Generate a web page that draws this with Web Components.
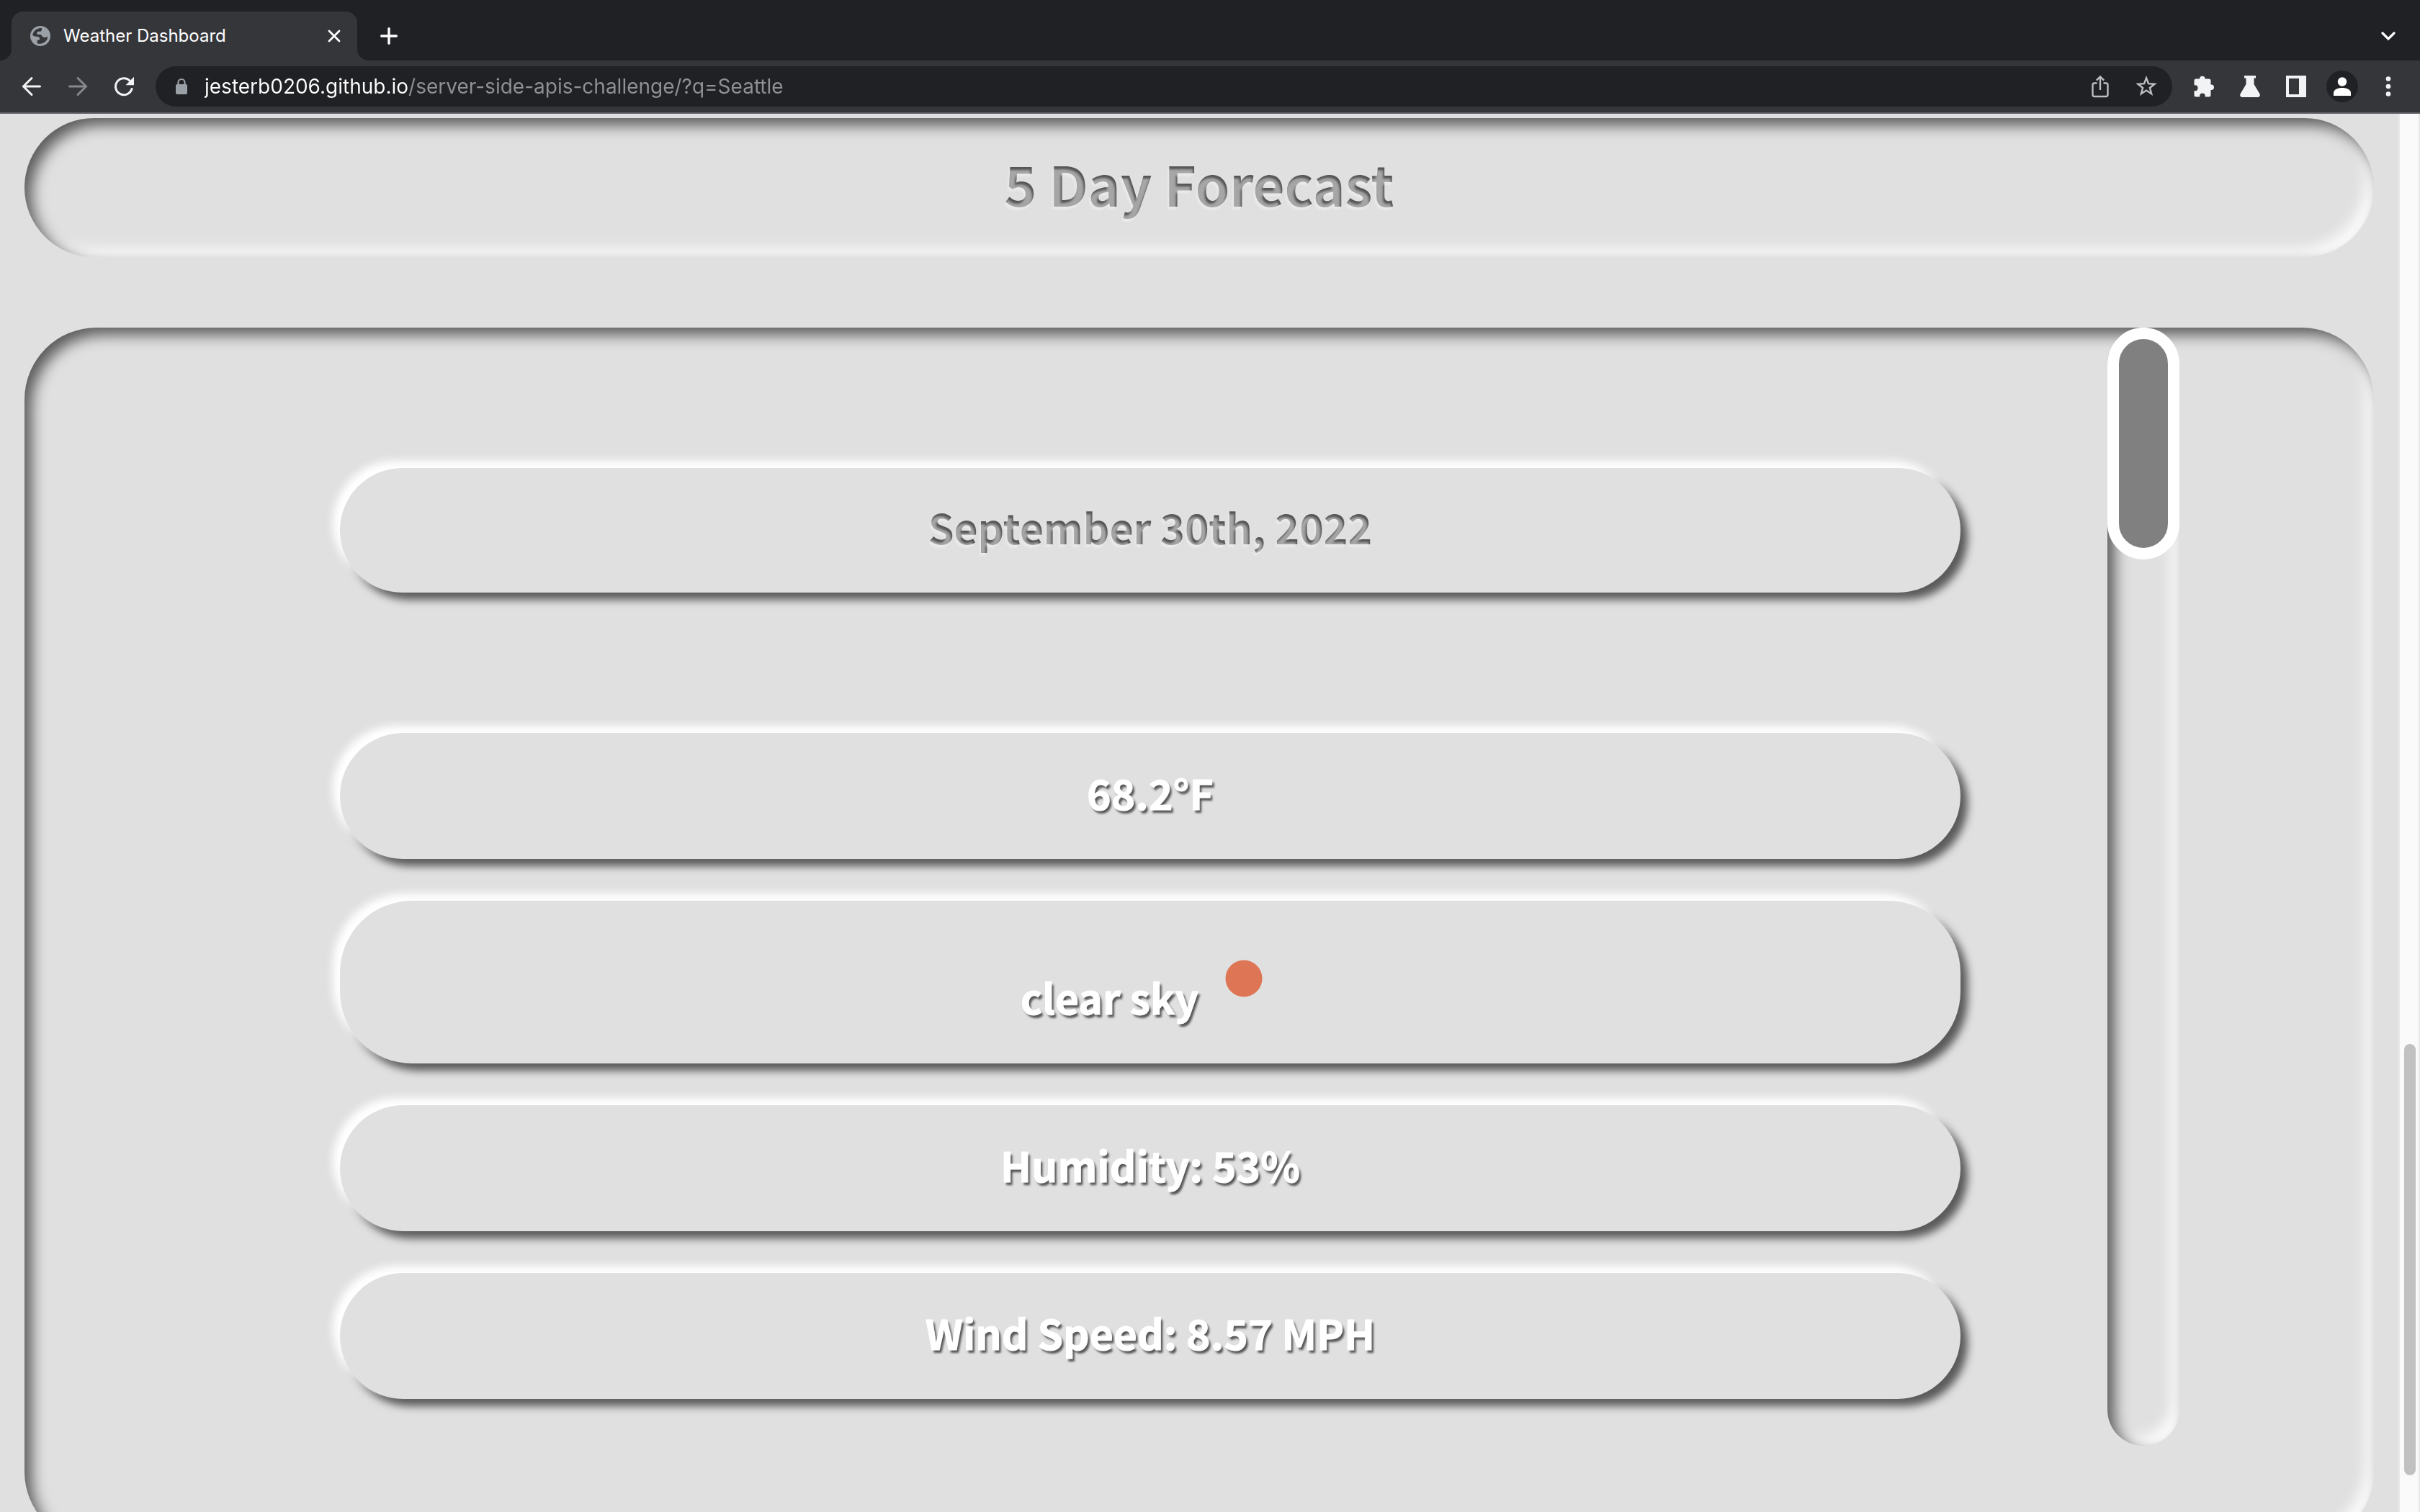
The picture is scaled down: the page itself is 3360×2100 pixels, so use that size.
<!DOCTYPE html>
<html lang="en">
<head>
<meta charset="utf-8">
<title>Weather Dashboard</title>
<style>
html, body { height: 100%; margin: 0; overflow: hidden; }
body {
  --strip: #202124;
  --toolbar: #35363a;
  --surface: #e0e0e0;
  --shade: #565656;
  --glow: rgba(245, 245, 245, .5);
  --inset: inset 10px 10px 20px #5a5a5a, inset -10px -10px 20px #fff;
  --raised: -10px -10px 12px #fff, 10px 10px 12px #5a5a5a;
  font-family: Inter, "Liberation Sans", sans-serif;
}
</style>
</head>
<body>
<browser-window>
  <tab-strip slot="tabs"><browser-tab>Weather Dashboard</browser-tab></tab-strip>
  <tool-bar slot="toolbar" url="jesterb0206.github.io/server-side-apis-challenge/?q=Seattle"></tool-bar>
  <weather-page>
    <section-title>5 Day Forecast</section-title>
    <forecast-panel>
      <forecast-date>September 30th, 2022</forecast-date>
      <forecast-item>68.2°F</forecast-item>
      <forecast-item>clear sky <sun-icon></sun-icon></forecast-item>
      <forecast-item>Humidity: 53%</forecast-item>
      <forecast-item>Wind Speed: 8.57 MPH</forecast-item>
    </forecast-panel>
  </weather-page>
  <page-scrollbar slot="scrollbar"></page-scrollbar>
</browser-window>
<script>
const define = (name, html, ready) => customElements.define(name, class extends HTMLElement {
  constructor() {
    super();
    this.attachShadow({ mode: 'open' }).innerHTML = html;
  }
  connectedCallback() { if (ready) ready(this, this.shadowRoot); }
});

const base = `:host,*{box-sizing:border-box}
*{margin:0}
button{display:grid;place-items:center;border:0;padding:0;background:none;color:inherit;font:inherit;flex:none}
svg{display:block}`;

define('browser-window', `<style>${base}
:host{display:flex;flex-direction:column;height:100vh;overflow:hidden}
.view{flex:1;min-height:0;display:flex;background:var(--surface)}
main{flex:1;min-width:0;overflow:hidden}
</style>
<slot name="tabs"></slot><slot name="toolbar"></slot>
<div class="view"><main><slot></slot></main><slot name="scrollbar"></slot></div>`);

define('tab-strip', `<style>${base}
:host{display:flex;align-items:flex-end;flex:none;height:84px;padding:0 16px;background:var(--strip);color:#fff}
.plus{width:56px;height:68px;margin-left:16px}
.more{width:56px;height:68px;margin-left:auto}
</style>
<slot></slot>
<button class="plus" aria-label="New tab"><svg width="24" height="24" viewBox="0 0 24 24" stroke="#fff" stroke-width="3.4" stroke-linecap="round"><path d="M12 1.7v20.6M1.7 12h20.6"/></svg></button>
<button class="more" aria-label="Search tabs"><svg width="20" height="14" viewBox="0 0 20 14" fill="none" stroke="#fff" stroke-width="3.2" stroke-linecap="round"><path d="M2 3l8 8 8-8"/></svg></button>`);

define('browser-tab', `<style>${base}
:host{display:flex;align-items:center;position:relative;width:480px;height:68px;padding:0 18px 0 26px;border-radius:16px 16px 0 0;background:var(--toolbar);font-size:24px;line-height:32px}
:host::before,:host::after{content:"";position:absolute;bottom:0;width:16px;height:16px}
:host::before{right:100%;background:radial-gradient(circle at 0 0,transparent 16px,var(--toolbar) 16px)}
:host::after{left:100%;background:radial-gradient(circle at 100% 0,transparent 16px,var(--toolbar) 16px)}
span{flex:1;margin-left:18px;white-space:nowrap}
button{width:28px;height:28px}
</style>
<svg width="28" height="28" viewBox="0 0 28 28"><circle cx="14" cy="14" r="14" fill="#9aa0a6"/><path d="M16 3.200C10.500 2.500 4.800 6 3.200 12.500c1.200 1.700 3 2.300 6 2.200 2.600 0 3.800.8 3.800 3.300v1.500H9.800v4.700c5 1.600 10.700-.4 13.700-5.700.4-1.300.6-2.500.6-3.700-1.700 1.200-4 1.500-6.300.7-1.500-.7-1.900-2.600-3.300-3.400h-4.300c-1.500-1.500-1-4 1-4.300h2.600c1.800 0 2.200-1.300 2.200-4.600z" fill="#35363a"/></svg>
<span><slot></slot></span>
<button aria-label="Close tab"><svg width="18" height="18" viewBox="0 0 18 18" stroke="#fff" stroke-width="2.800" stroke-linecap="round"><path d="M2 2l14 14M16 2L2 16"/></svg></button>`);

define('tool-bar', `<style>${base}
:host{display:flex;align-items:center;flex:none;height:74px;padding:0 12px;background:var(--toolbar);border-bottom:2px solid #5f6064}
button{width:64px;height:56px}
form{flex:1;min-width:0;display:flex;align-items:center;height:56px;margin:0 12px;padding:0 4px 0 27px;border-radius:28px;background:var(--strip)}
input{flex:1;min-width:0;margin-left:23px;padding:0;border:0;outline:0;height:40px;font:28px/40px Inter,"Liberation Sans",sans-serif;color:transparent;-webkit-text-fill-color:transparent;background:linear-gradient(90deg,#fff var(--host-end),#8f9193 var(--host-end));background-clip:text;-webkit-background-clip:text}
.avatar span{display:grid;place-items:center;width:44px;height:44px;border-radius:50%;background:var(--strip)}
</style>
<button aria-label="Back"><svg width="28" height="28" viewBox="0 0 28 28" fill="none" stroke="#f1f3f4" stroke-width="3" stroke-linecap="round"><path d="M25.500 14H3M14 2.500L2.500 14 14 25.500"/></svg></button>
<button aria-label="Forward"><svg width="28" height="28" viewBox="0 0 28 28" fill="none" stroke="#87888b" stroke-width="3" stroke-linecap="round"><path d="M2.500 14H25M14 2.500L25.500 14 14 25.500"/></svg></button>
<button aria-label="Reload"><svg width="28" height="28" viewBox="0 0 28 28"><path d="M22.600 6.600A11.500 11.500 0 1 0 25 17.500" fill="none" stroke="#f1f3f4" stroke-width="3" stroke-linecap="round"/><path d="M28 .8v11.400H16.500z" fill="#f1f3f4"/></svg></button>
<form>
<svg width="18" height="24" viewBox="0 0 18 24"><rect x="1" y="9" width="16" height="14" rx="2" fill="#9aa0a6"/><path d="M4.500 9V6.500a4.500 4.500 0 0 1 9 0V9" fill="none" stroke="#9aa0a6" stroke-width="2.200"/></svg>
<input id="url" aria-label="Address" spellcheck="false">
<button type="button" aria-label="Share"><svg width="24" height="32" viewBox="0 0 24 32" fill="none" stroke="#bdbec0" stroke-width="2.400"><path d="M7.500 11.500H4a2.500 2.500 0 0 0-2.500 2.500v13.500A2.500 2.500 0 0 0 4 30h16a2.500 2.500 0 0 0 2.500-2.500V14a2.500 2.500 0 0 0-2.500-2.500h-3.500M12 21V3M6.800 7.600L12 2.400l5.200 5.200"/></svg></button>
<button type="button" aria-label="Bookmark"><svg width="30" height="30" viewBox="0 0 30 30" fill="none" stroke="#bdbec0" stroke-width="2.400"><path d="M15 3.200l3 8 8.600.5-6.700 5.300 2.300 8.300-7.200-4.700-7.200 4.700 2.300-8.300-6.700-5.300 8.600-.5z"/></svg></button>
</form>
<button aria-label="Extensions"><svg width="30" height="30" viewBox="0 0 30 30" fill="#f1f3f4"><path d="M9 4.500a3.800 3.800 0 0 1 7.600 0H22A2.500 2.500 0 0 1 24.500 7v5.500h.7a3.800 3.800 0 0 1 0 7.600h-.7V27a2.500 2.500 0 0 1-2.500 2.500h-5.300V28.300a3.800 3.800 0 0 0-7.600 0v1.200H4A2.500 2.500 0 0 1 1.500 27v-5.800h1a4 4 0 0 0 0-8h-1V7A2.500 2.500 0 0 1 4 4.500z"/></svg></button>
<button aria-label="Labs"><svg width="28" height="30" viewBox="0 0 28 30" fill="#f1f3f4"><path d="M6 0h16v3.500h-2.500V12l8 13.500c1 2-.2 4.500-2.500 4.500H3c-2.300 0-3.500-2.500-2.500-4.500l8-13.500V3.500H6z"/></svg></button>
<button aria-label="Side panel"><svg width="28" height="30" viewBox="0 0 28 30"><path d="M0 0h28v30H0zM4 4v22h14V4z" fill="#f1f3f4" fill-rule="evenodd"/></svg></button>
<button class="avatar" aria-label="Profile"><span><svg width="24" height="26" viewBox="0 0 24 26" fill="#fff"><circle cx="12" cy="6.500" r="6.200"/><path d="M0 26v-4c0-4.500 6-7 12-7s12 2.500 12 7v4z"/></svg></span></button>
<button aria-label="Menu"><svg width="8" height="28" viewBox="0 0 8 28" fill="#f1f3f4"><circle cx="4" cy="3.500" r="3.300"/><circle cx="4" cy="14" r="3.300"/><circle cx="4" cy="24.500" r="3.300"/></svg></button>`,
(host, root) => {
  const url = host.getAttribute('url');
  const input = root.querySelector('input');
  input.value = url;
  const pen = document.createElement('canvas').getContext('2d');
  pen.font = '28px Inter';
  input.style.setProperty('--host-end', Math.round(pen.measureText(url.split('/')[0]).width) + 'px');
});

define('weather-page', `<style>${base}
:host{display:flex;flex-direction:column;gap:98px;padding:6px 34px 0;color:#fff;font-family:"Noto Sans CJK SC","Noto Sans CJK JP",sans-serif;font-weight:700}
</style><slot></slot>`);

const engraved = `color:transparent;background:var(--shade);background-clip:text;-webkit-background-clip:text;text-shadow:-2px 4px 3px var(--glow);font-weight:700`;

define('section-title', `<style>${base}
:host{display:flex;justify-content:center;padding:40px 0 53px;border-radius:100px;box-shadow:var(--inset)}
h2{font-size:76px;line-height:100px;${engraved}}
</style><h2><slot></slot></h2>`);

define('forecast-panel', `<style>${base}
:host{display:grid;grid-template-columns:438fr 2250fr 204fr 100px 270fr;flex:none;border-radius:100px;box-shadow:var(--inset)}
.list{grid-column:2;display:flex;flex-direction:column;gap:58px;padding:195px 0 201px}
.track{grid-column:4;margin-bottom:136px;border-radius:50px;box-shadow:var(--inset)}
.thumb{height:322px;border:16px solid #fff;border-radius:50px;background:gray}
</style><div class="list"><slot></slot></div><div class="track"><div class="thumb"></div></div>`);

const card = `display:flex;justify-content:center;border-radius:100px;background:var(--surface);box-shadow:var(--raised);font-size:57px;line-height:49px;padding:58px 46px 68px`;

define('forecast-date', `<style>${base}
:host{${card};padding:40px 46px 50px;line-height:83px;margin-bottom:137px}
h3{font-size:inherit;${engraved}}
</style><h3><slot></slot></h3>`);

define('forecast-item', `<style>${base}
:host{${card}}
p{-webkit-text-stroke:1px #fff;text-shadow:3px 4px 3px var(--shade)}
</style><p><slot></slot></p>`);

define('sun-icon', `<style>:host{display:inline-block;width:100px;height:100px}svg{display:block}</style>
<svg width="100" height="100" viewBox="0 0 100 100" role="img" aria-label="clear sky icon"><circle cx="50" cy="50" r="25.500" fill="#de7554"/></svg>`);

define('page-scrollbar', `<style>
:host{box-sizing:border-box;display:flex;flex-direction:column;flex:none;width:30px;padding:0 4px 0 6px;background:#fafafa;border:solid #e8e8e8;border-width:0 2px}
.before{flex:1292}.thumb{flex:599;border-radius:8px;background:#c1c1c1}.after{flex:51}
</style><div class="before"></div><div class="thumb"></div><div class="after"></div>`);
</script>
</body>
</html>
